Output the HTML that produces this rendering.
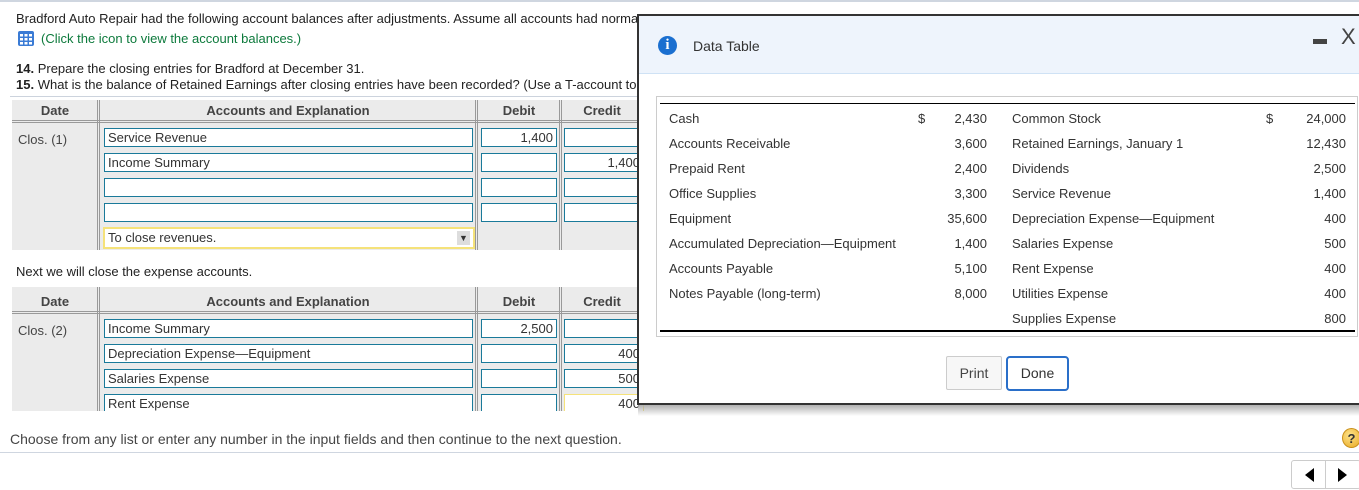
<!DOCTYPE html>
<html><head><meta charset="utf-8"><style>
*{margin:0;padding:0;box-sizing:border-box}
body{width:1359px;height:490px;position:relative;overflow:hidden;background:#fff;font-family:"Liberation Sans",sans-serif;font-size:13px;color:#222}
.a{position:absolute;white-space:nowrap}
.g{position:absolute;background:#ebebeb}
.inp{position:absolute;background:#fff;border:1px solid #1a7a9a;height:19px;line-height:17px;padding:0 3px;font-size:13px;color:#333}
.r{text-align:right}
.hd{position:absolute;font-weight:bold;color:#444;text-align:center}
.vl{position:absolute;width:3px;border-left:1px solid #999;border-right:1px solid #999}
.dt{position:absolute;font-size:13px;color:#333;white-space:nowrap}
</style></head><body>
<div style="position:absolute;left:0;top:0;width:1359px;height:2px;background:#cfd6e0"></div>
<div class="a" style="left:16px;top:11px">Bradford Auto Repair had the following account balances after adjustments. Assume all accounts had norma</div>
<svg class="a" style="left:18px;top:31px" width="16" height="15"><rect x="0" y="0" width="16" height="15" rx="2" fill="#3a7bd5"/><g fill="#fff"><rect x="2" y="3" width="3" height="2.5"/><rect x="6.5" y="3" width="3" height="2.5"/><rect x="11" y="3" width="3" height="2.5"/><rect x="2" y="7" width="3" height="2.5"/><rect x="6.5" y="7" width="3" height="2.5"/><rect x="11" y="7" width="3" height="2.5"/><rect x="2" y="11" width="3" height="2.5"/><rect x="6.5" y="11" width="3" height="2.5"/><rect x="11" y="11" width="3" height="2.5"/></g></svg>
<div class="a" style="left:41px;top:31px;color:#0d7a3c">(Click the icon to view the account balances.)</div>
<div class="a" style="left:16px;top:61px"><b>14.</b> Prepare the closing entries for Bradford at December 31.</div>
<div class="a" style="left:16px;top:77px"><b>15.</b> What is the balance of Retained Earnings after closing entries have been recorded? (Use a T-account to</div>
<div style="position:absolute;left:10px;top:96px;width:630px;height:1px;background:#ccd3dd"></div>

<div class="g" style="left:12px;top:100px;width:628px;height:150px"></div>
<div style="position:absolute;left:12px;top:120px;width:628px;height:3px;border-top:1px solid #999;border-bottom:1px solid #999"></div>
<div class="hd" style="left:12px;top:103px;width:86px">Date</div>
<div class="hd" style="left:100px;top:103px;width:376px">Accounts and Explanation</div>
<div class="hd" style="left:478px;top:103px;width:82px">Debit</div>
<div class="hd" style="left:562px;top:103px;width:80px">Credit</div>
<div class="vl" style="left:97px;top:100px;height:150px"></div>
<div class="vl" style="left:475px;top:100px;height:150px"></div>
<div class="vl" style="left:559px;top:100px;height:150px"></div>
<div class="a" style="left:18px;top:132px;color:#444">Clos. (1)</div>
<div class="inp" style="left:104px;top:128px;width:369px">Service Revenue</div>
<div class="inp r" style="left:481px;top:128px;width:76px">1,400</div>
<div class="inp" style="left:564px;top:128px;width:80px"></div>
<div class="inp" style="left:104px;top:153px;width:369px">Income Summary</div>
<div class="inp" style="left:481px;top:153px;width:76px"></div>
<div class="inp r" style="left:564px;top:153px;width:80px">1,400</div>
<div class="inp" style="left:104px;top:178px;width:369px"></div>
<div class="inp" style="left:481px;top:178px;width:76px"></div>
<div class="inp" style="left:564px;top:178px;width:80px"></div>
<div class="inp" style="left:104px;top:203px;width:369px"></div>
<div class="inp" style="left:481px;top:203px;width:76px"></div>
<div class="inp" style="left:564px;top:203px;width:80px"></div>
<div class="inp" style="left:103px;top:227px;width:372px;height:22px;border:2px solid #f5e27a;line-height:18px">To close revenues.<span style="position:absolute;right:3px;top:2px;width:13px;height:14px;background:#ddd;font-size:9px;line-height:14px;text-align:center">&#9660;</span></div>

<div class="a" style="left:16px;top:264px">Next we will close the expense accounts.</div>

<div class="g" style="left:12px;top:287px;width:628px;height:124px"></div>
<div style="position:absolute;left:12px;top:311px;width:628px;height:3px;border-top:1px solid #999;border-bottom:1px solid #999"></div>
<div class="hd" style="left:12px;top:294px;width:86px">Date</div>
<div class="hd" style="left:100px;top:294px;width:376px">Accounts and Explanation</div>
<div class="hd" style="left:478px;top:294px;width:82px">Debit</div>
<div class="hd" style="left:562px;top:294px;width:80px">Credit</div>
<div class="vl" style="left:97px;top:287px;height:124px"></div>
<div class="vl" style="left:475px;top:287px;height:124px"></div>
<div class="vl" style="left:559px;top:287px;height:124px"></div>
<div class="a" style="left:18px;top:323px;color:#444">Clos. (2)</div>
<div class="inp" style="left:104px;top:319px;width:369px">Income Summary</div>
<div class="inp r" style="left:481px;top:319px;width:76px">2,500</div>
<div class="inp" style="left:564px;top:319px;width:80px"></div>
<div class="inp" style="left:104px;top:344px;width:369px">Depreciation Expense—Equipment</div>
<div class="inp" style="left:481px;top:344px;width:76px"></div>
<div class="inp r" style="left:564px;top:344px;width:80px">400</div>
<div class="inp" style="left:104px;top:369px;width:369px">Salaries Expense</div>
<div class="inp" style="left:481px;top:369px;width:76px"></div>
<div class="inp r" style="left:564px;top:369px;width:80px">500</div>
<div style="position:absolute;left:104px;top:394px;width:369px;height:17px;overflow:hidden"><div class="inp" style="left:0;top:0;width:369px">Rent Expense</div></div>
<div style="position:absolute;left:481px;top:394px;width:76px;height:17px;overflow:hidden"><div class="inp" style="left:0;top:0;width:76px"></div></div>
<div style="position:absolute;left:564px;top:394px;width:80px;height:17px;overflow:hidden"><div class="inp r" style="left:0;top:0;width:80px;border-color:#f5e27a">400</div></div>

<div class="a" style="left:10px;top:431px;font-size:14px;color:#444">Choose from any list or enter any number in the input fields and then continue to the next question.</div>
<div style="position:absolute;left:0;top:452px;width:1359px;height:1px;background:#cfd6e0"></div>
<div style="position:absolute;left:1342px;top:428px;width:19px;height:20px;border-radius:50%;background:radial-gradient(circle at 40% 35%,#fde38a,#e9a922);border:1px solid #c9901a;font-weight:bold;font-size:13px;text-align:center;line-height:19px;color:#333">?</div>
<div style="position:absolute;left:1291px;top:460px;width:70px;height:29px;border:1px solid #ccc;border-radius:3px;background:#fff"></div>
<div style="position:absolute;left:1325px;top:460px;width:1px;height:29px;background:#ccc"></div>
<svg class="a" style="left:1300px;top:466px" width="60" height="18"><path d="M14 2 L5 9 L14 16Z" fill="#000"/><path d="M38 2 L47 9 L38 16Z" fill="#000"/></svg>
<div style="position:absolute;left:638px;top:404px;width:721px;height:12px;background:linear-gradient(#aaa,rgba(255,255,255,0))"></div>

<div style="position:absolute;left:637px;top:14px;width:730px;height:391px;border:2px solid #333;background:#fff">
 <div style="position:absolute;left:0;top:0;width:100%;height:58px;background:#eef4fc;border-bottom:1px solid #cfe2f5"></div>
 <div style="position:absolute;left:19px;top:20px;width:19px;height:19px;border-radius:50%;background:#1a6fd0;color:#fff;font-weight:bold;font-family:'Liberation Serif',serif;font-size:15px;text-align:center;line-height:19px">i</div>
 <div class="a" style="left:54px;top:22px;font-size:14px;color:#333">Data Table</div>
 <div style="position:absolute;left:674px;top:23px;width:14px;height:5px;background:#444"></div>
 <div class="a" style="left:702px;top:8px;font-size:22px;color:#444">X</div>
 <div style="position:absolute;left:17px;top:80px;width:702px;height:241px;border:1px solid #ccc"></div>
 <div style="position:absolute;left:21px;top:87px;width:695px;height:1px;background:#000"></div>
 <div style="position:absolute;left:21px;top:314px;width:695px;height:2px;background:#000"></div>
</div>
<div class="dt" style="left:669px;top:106px;line-height:25px">Cash<br>Accounts Receivable<br>Prepaid Rent<br>Office Supplies<br>Equipment<br>Accumulated Depreciation—Equipment<br>Accounts Payable<br>Notes Payable (long-term)</div>
<div class="dt" style="left:918px;top:106px;line-height:25px">$</div>
<div class="dt r" style="left:927px;top:106px;width:60px;line-height:25px">2,430<br>3,600<br>2,400<br>3,300<br>35,600<br>1,400<br>5,100<br>8,000</div>
<div class="dt" style="left:1012px;top:106px;line-height:25px">Common Stock<br>Retained Earnings, January 1<br>Dividends<br>Service Revenue<br>Depreciation Expense—Equipment<br>Salaries Expense<br>Rent Expense<br>Utilities Expense<br>Supplies Expense</div>
<div class="dt" style="left:1266px;top:106px;line-height:25px">$</div>
<div class="dt r" style="left:1286px;top:106px;width:60px;line-height:25px">24,000<br>12,430<br>2,500<br>1,400<br>400<br>500<br>400<br>400<br>800</div>
<div style="position:absolute;left:946px;top:356px;width:56px;height:34px;border:1px solid #ccc;border-radius:2px;background:#f7f7f7;text-align:center;line-height:32px;font-size:14px;color:#444">Print</div>
<div style="position:absolute;left:1006px;top:356px;width:63px;height:35px;border:2px solid #2a6fc9;border-radius:4px;background:#fff;text-align:center;line-height:31px;font-size:14px;color:#333">Done</div>
</body></html>
